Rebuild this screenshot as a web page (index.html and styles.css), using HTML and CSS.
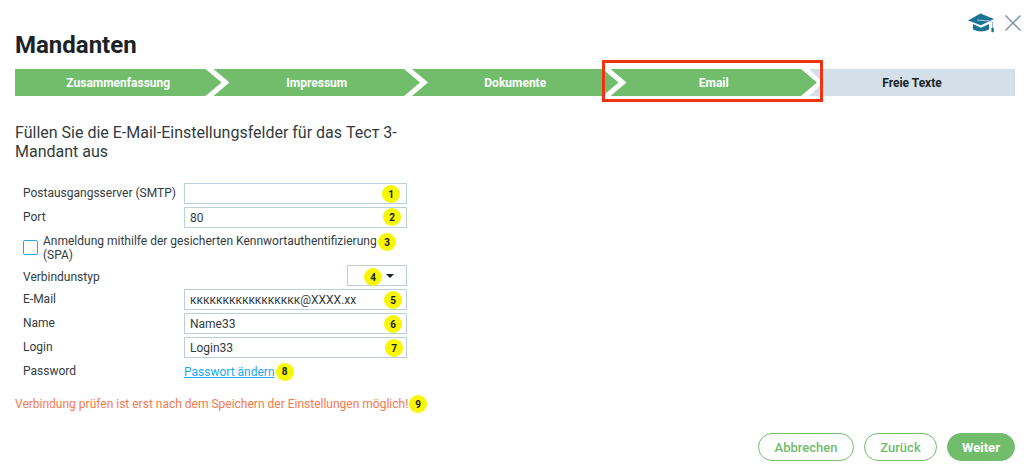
FILE: index.html
```html
<!DOCTYPE html>
<html lang="de">
<head>
<meta charset="utf-8">
<title>Mandanten</title>
<link rel="stylesheet" href="styles.css">
</head>
<body>
<div class="page">
  <div class="topbar">
    <svg class="cap" viewBox="0 0 27 20" width="27" height="20">
      <path d="M0 7.5 L12.5 0.5 L26 6 L13 12.2 Z" fill="#1b7396"/>
      <path d="M5 11 L13 14.8 L21 11 L21 16.5 Q13 20.5 5 16.5 Z" fill="#1b7396"/>
      <path d="M9 7 L21.5 8 L25 9.5" fill="none" stroke="#bcd7e2" stroke-width="0.9"/>
      <path d="M24.6 8.5 V15" stroke="#7fb0c6" stroke-width="0.9"/>
      <rect x="23.4" y="14.8" width="2.4" height="4.4" rx="0.8" fill="#1b7396"/>
    </svg>
    <svg class="close" viewBox="0 0 16 16" width="16" height="16">
      <path d="M0.5 0.5 L15.5 15.5 M15.5 0.5 L0.5 15.5" stroke="#7a8ba8" stroke-width="1.3" fill="none"/>
    </svg>
  </div>
  <h1 class="title">Mandanten</h1>
  <div class="steps">
    <div class="step done first">Zusammenfassung</div>
    <div class="step done">Impressum</div>
    <div class="step done">Dokumente</div>
    <div class="step done">Email</div>
    <div class="step todo">Freie Texte</div>
    <div class="highlight"></div>
  </div>
  <p class="intro">Füllen Sie die E-Mail-Einstellungsfelder für das Тест 3-Mandant aus</p>
  <div class="form">
    <div class="row">
      <span class="label">Postausgangsserver (SMTP)</span>
      <div class="field"><input class="input" type="text" value=""><span class="badge b1">1</span></div>
    </div>
    <div class="row">
      <span class="label">Port</span>
      <div class="field"><input class="input" type="text" value="80"><span class="badge b2">2</span></div>
    </div>
    <div class="check-row">
      <span class="check"></span>
      <span class="check-label">Anmeldung mithilfe der gesicherten Kennwortauthentifizierung (SPA)</span>
      <span class="badge b3">3</span>
    </div>
    <div class="row">
      <span class="label label-select">Verbindunstyp</span>
      <div class="field field-select">
        <div class="select"><span class="caret"></span></div>
        <span class="badge b4">4</span>
      </div>
    </div>
    <div class="row">
      <span class="label">E-Mail</span>
      <div class="field"><input class="input" type="text" value="ккккккккккккккккк@XXXX.xx"><span class="badge b5">5</span></div>
    </div>
    <div class="row">
      <span class="label">Name</span>
      <div class="field"><input class="input" type="text" value="Name33"><span class="badge b6">6</span></div>
    </div>
    <div class="row">
      <span class="label">Login</span>
      <div class="field"><input class="input" type="text" value="Login33"><span class="badge b7">7</span></div>
    </div>
    <div class="row">
      <span class="label">Password</span>
      <div class="link-wrap"><a class="link" href="#">Passwort ändern</a><span class="badge inline">8</span></div>
    </div>
  </div>
  <div class="warning">Verbindung prüfen ist erst nach dem Speichern der Einstellungen möglich!<span class="badge inline">9</span></div>
  <div class="actions">
    <button class="btn outline b-cancel">Abbrechen</button>
    <button class="btn outline b-back">Zurück</button>
    <button class="btn solid b-next">Weiter</button>
  </div>
</div>
</body>
</html>
```
FILE: styles.css
```css
* { box-sizing: border-box; }
html, body { margin: 0; padding: 0; background: #fff; }
body { font-family: Roboto, "Liberation Sans", sans-serif; color: #333b40; overflow: hidden; }
.page { width: 1030px; height: 469px; padding: 13px 15px 0; }
.topbar { display: flex; justify-content: flex-end; align-items: flex-start; gap: 10px; height: 20px; margin-right: -6px; }
.close { margin-top: 2px; }
.title { margin: 0; height: 36px; padding-top: 0; font-size: 24px; line-height: 24px; font-weight: 700; color: #1a2327; }
.steps { position: relative; display: flex; height: 27px; }
.step { flex: none; width: 206.5px; height: 27px; margin-right: -8px; display: flex; align-items: center; justify-content: center; font-size: 12px; font-weight: 700; }
.done { background: #72bd6c; color: #fff; clip-path: polygon(0 0, 190.5px 0, 206.5px 50%, 190.5px 100%, 0 100%, 16px 50%); }
.first { clip-path: polygon(0 0, 190.5px 0, 206.5px 50%, 190.5px 100%, 0 100%); }
.todo { flex: 1 1 auto; margin-left: 0; margin-right: 0; width: auto; background: #d3e0e9; color: #1a2327; clip-path: polygon(0 0, 100% 0, 100% 100%, 0 100%, 14px 50%); }
.highlight { position: absolute; left: 587px; top: -9px; width: 221px; height: 42px; border: 3px solid #f0340f; }
.intro { width: 400px; margin: 27px 0 0; font-size: 16px; line-height: 19px; color: #333b40; }
.form { margin: 22px 0 0 8px; width: 384px; font-size: 12px; }
.row { display: flex; height: 21px; margin-bottom: 3px; align-items: flex-start; }
.label { flex: none; width: 161px; line-height: 20px; }
.label-select { padding-top: 2px; }
.field { position: relative; flex: none; width: 223px; height: 21px; }
.input { display: block; width: 100%; height: 21px; padding: 1px 5px 0; border: 1px solid #b9d0dd; border-radius: 0; outline: none; background: #fff; font: inherit; font-size: 12px; color: #333b40; }
.check-row { position: relative; display: flex; align-items: flex-start; height: 34px; padding-top: 3px; margin-bottom: 0; }
.check { flex: none; width: 15px; height: 15px; margin-top: 6px; border: 1px solid #2aa5e0; border-radius: 2px; background: #fff; }
.check-label { width: 345px; margin-left: 5px; line-height: 14px; }
.field-select { display: flex; justify-content: flex-end; }
.select { position: relative; width: 60px; height: 21px; border: 1px solid #b9d0dd; display: flex; align-items: center; justify-content: flex-end; padding-right: 12px; }
.caret { width: 0; height: 0; border-left: 4px solid transparent; border-right: 4px solid transparent; border-top: 4px solid #1a2327; }
.link-wrap { display: flex; align-items: center; height: 21px; }
.link { color: #1aa9f0; font-size: 12px; }
.badge { display: flex; align-items: center; justify-content: center; flex: none; width: 18px; height: 18px; border-radius: 50%; background: #f7f700; color: #1a1a1a; font-size: 10px; font-weight: 700; }
.field .badge, .check-row .badge { position: absolute; }
.b1 { left: 198px; top: 2px; }
.b2 { left: 199px; top: 1px; }
.b3 { left: 355px; top: 2px; }
.b4 { left: 180px; top: 3px; }
.b5 { left: 200px; top: 2px; }
.b6 { left: 200px; top: 2px; }
.b7 { left: 201px; top: 2px; }
.inline { margin-left: 1px; }
.warning { display: flex; align-items: center; margin-top: 13px; height: 18px; font-size: 12px; color: #f47a4e; }
.actions { display: flex; justify-content: flex-end; gap: 10px; margin-top: 20px; }
.btn { height: 28px; padding: 0; border-radius: 14px; font: inherit; font-size: 13px; font-weight: 500; }
.outline { background: #fff; border: 1px solid #72bd6c; color: #72bd6c; }
.solid { background: #72bd6c; border: 1px solid #72bd6c; color: #fff; font-weight: 700; }
.b-cancel { width: 96px; }
.b-back { width: 73px; }
.b-next { width: 68px; }
```
